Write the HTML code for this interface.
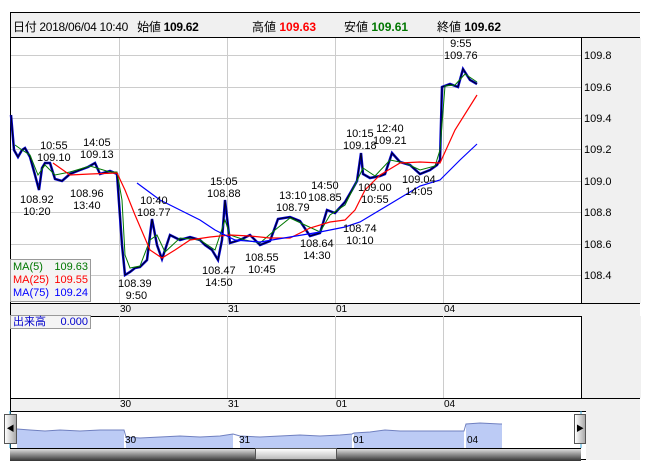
<!DOCTYPE html><html><head><meta charset="utf-8"><style>
body{margin:0;width:652px;height:469px;background:#fff;position:relative;overflow:hidden;font-family:"Liberation Sans","Noto Sans CJK JP",sans-serif;font-size:11px;color:#000}
.a{position:absolute}
.t{position:absolute;line-height:12px;text-align:center;font-size:11px;white-space:nowrap}
</style></head><body>
<div class="a" style="left:10px;top:12px;width:630px;height:448px;border:1px solid #000;box-sizing:border-box"></div>
<div class="a" style="left:11px;top:13px;width:629px;height:24px;background:#f0f0f0;border-bottom:1px solid #000"></div>
<div class="a" style="left:13px;top:18px;font-size:12px;letter-spacing:-0.3px">日付 2018/06/04 10:40&nbsp;&nbsp; 始値 <b>109.62</b></div>
<div class="a" style="left:252px;top:18px;font-size:12px">高値 <b style="color:#f00">109.63</b></div>
<div class="a" style="left:344px;top:18px;font-size:12px">安値 <b style="color:#070">109.61</b></div>
<div class="a" style="left:437px;top:18px;font-size:12px">終値 <b>109.62</b></div>
<div class="a" style="left:581px;top:38px;width:59px;height:265px;background:#f0f0f0;border-left:1px solid #000"></div>
<div class="a" style="left:11px;top:303px;width:629px;height:12px;background:#f0f0f0;border-top:1px solid #000;border-bottom:1px solid #000"></div>
<div class="a" style="left:581px;top:316px;width:59px;height:82px;background:#f0f0f0;border-left:1px solid #000"></div>
<div class="a" style="left:11px;top:398px;width:629px;height:12px;background:#f0f0f0;border-top:1px solid #000;border-bottom:1px solid #000"></div>
<div class="a" style="left:586px;top:411px;width:54px;height:49px;background:#f0f0f0"></div>
<svg class="a" style="left:0;top:0" width="652" height="469">
<g stroke="#ccc" stroke-width="1">
<line x1="11" y1="55.5" x2="581" y2="55.5"/><line x1="11" y1="87.5" x2="581" y2="87.5"/><line x1="11" y1="118.5" x2="581" y2="118.5"/><line x1="11" y1="149.5" x2="581" y2="149.5"/><line x1="11" y1="181.5" x2="581" y2="181.5"/><line x1="11" y1="212.5" x2="581" y2="212.5"/><line x1="11" y1="244.5" x2="581" y2="244.5"/><line x1="11" y1="275.5" x2="581" y2="275.5"/>
<line x1="119.5" y1="38" x2="119.5" y2="303"/><line x1="227.5" y1="38" x2="227.5" y2="303"/><line x1="335.5" y1="38" x2="335.5" y2="303"/><line x1="443.5" y1="38" x2="443.5" y2="303"/>
<line x1="119.5" y1="316" x2="119.5" y2="398"/><line x1="227.5" y1="316" x2="227.5" y2="398"/><line x1="335.5" y1="316" x2="335.5" y2="398"/><line x1="443.5" y1="316" x2="443.5" y2="398"/>
</g>
<polyline fill="none" stroke="#00c" stroke-width="2.5" points="11,115 14,150 18,157 22,150 25,148 30,157 35,175 39,190 42,168 45,163 50,163 55,179 62,181 70,174 80,170 88,167 95,163 100,174 110,171 117,174 122,245 125,275 130,272 135,268 140,267 147,260 152,219 157,245 162,259 170,235 180,240 190,237 200,240 205,245 212,250 218,260 222,240 225,200 230,243 240,240 250,235 260,245 270,241 278,219 290,217 300,221 310,236 320,233 327,210 335,213 345,202 352,190 357,181 361,153 363,174 370,178 380,176 385,174 392,153 400,162 410,165 420,174 430,170 437,165 440,160 442,87 450,84 458,87 463,69 470,80 477,84"/>
<polyline fill="none" stroke="#000" stroke-width="0.8" points="11,115 14,150 18,157 22,150 25,148 30,157 35,175 39,190 42,168 45,163 50,163 55,179 62,181 70,174 80,170 88,167 95,163 100,174 110,171 117,174 122,245 125,275 130,272 135,268 140,267 147,260 152,219 157,245 162,259 170,235 180,240 190,237 200,240 205,245 212,250 218,260 222,240 225,200 230,243 240,240 250,235 260,245 270,241 278,219 290,217 300,221 310,236 320,233 327,210 335,213 345,202 352,190 357,181 361,153 363,174 370,178 380,176 385,174 392,153 400,162 410,165 420,174 430,170 437,165 440,160 442,87 450,84 458,87 463,69 470,80 477,84"/>
<polyline fill="none" stroke="#070" stroke-width="1" points="15,145 22,150 30,155 38,175 45,165 55,175 70,172 90,166 110,172 117,172 122,200 125,255 130,268 140,266 150,240 157,235 165,252 180,238 200,240 215,250 225,220 230,235 245,240 260,243 275,230 290,218 305,225 320,232 330,215 345,205 355,185 363,168 375,176 390,160 405,163 420,170 435,166 440,150 445,86 455,85 465,74 477,82"/>
<polyline fill="none" stroke="#f00" stroke-width="1.2" points="53,163 70,175 90,174 117,173 125,190 135,215 150,250 162,258 175,250 190,240 210,237 230,235 250,236 270,238 290,238 310,228 330,222 345,220 355,210 365,190 380,175 400,163 420,162 440,163 455,130 477,95"/>
<polyline fill="none" stroke="#00f" stroke-width="1.2" points="137,183 160,200 180,210 200,220 215,230 235,240 260,242 290,237 320,232 345,227 360,222 380,210 400,198 420,186 440,180 460,160 477,144"/>
<polygon fill="#bccbf5" points="17,448 17,429 30,430 45,431 60,430 80,431 100,430 124,430 124,448"/>
<polygon fill="#bccbf5" points="126,448 126,437 140,438 160,437 180,436 200,437 220,436 233,434 233,448"/>
<polygon fill="#bccbf5" points="240,448 240,436 260,437 280,436 300,435 320,436 340,435 352,434 352,448"/>
<polygon fill="#bccbf5" points="354,448 354,433 370,432 385,430 400,431 420,431 440,431 464,431 464,448"/>
<polygon fill="#bccbf5" points="466,448 466,424 480,423 500,424 502,424 502,448"/>
<polyline fill="none" stroke="#7080c0" points="17,429 30,430 45,431 60,430 80,431 100,430 124,430 126,437 140,438 160,437 180,436 200,437 220,436 233,434 240,436 260,437 280,436 300,435 320,436 340,435 352,434 354,433 370,432 385,430 400,431 420,431 440,431 464,431 466,424 480,423 500,424 502,424"/>
<line x1="10" y1="411" x2="10" y2="448" stroke="#3ad"/><line x1="581" y1="411" x2="581" y2="448" stroke="#3ad"/>
</svg>
<div class="t" style="left:37px;top:140px">10:55<br>109.10</div>
<div class="t" style="left:80px;top:137px">14:05<br>109.13</div>
<div class="t" style="left:20px;top:194px">108.92<br>10:20</div>
<div class="t" style="left:70px;top:188px">108.96<br>13:40</div>
<div class="t" style="left:137px;top:195px">10:40<br>108.77</div>
<div class="t" style="left:207px;top:176px">15:05<br>108.88</div>
<div class="t" style="left:118px;top:278px">108.39<br>&nbsp;9:50</div>
<div class="t" style="left:202px;top:265px">108.47<br>14:50</div>
<div class="t" style="left:245px;top:252px">108.55<br>10:45</div>
<div class="t" style="left:276px;top:190px">13:10<br>108.79</div>
<div class="t" style="left:308px;top:180px">14:50<br>108.85</div>
<div class="t" style="left:300px;top:238px">108.64<br>14:30</div>
<div class="t" style="left:343px;top:128px">10:15<br>109.18</div>
<div class="t" style="left:373px;top:123px">12:40<br>109.21</div>
<div class="t" style="left:358px;top:182px">109.00<br>10:55</div>
<div class="t" style="left:343px;top:223px">108.74<br>10:10</div>
<div class="t" style="left:402px;top:174px">109.04<br>14:05</div>
<div class="t" style="left:444px;top:38px">9:55<br>109.76</div>
<div class="a" style="left:584px;top:50px;line-height:12px">109.8</div>
<div class="a" style="left:584px;top:82px">109.6</div>
<div class="a" style="left:584px;top:113px">109.4</div>
<div class="a" style="left:584px;top:144px">109.2</div>
<div class="a" style="left:584px;top:176px">109.0</div>
<div class="a" style="left:584px;top:207px">108.8</div>
<div class="a" style="left:584px;top:239px">108.6</div>
<div class="a" style="left:584px;top:270px">108.4</div>
<div class="a" style="left:120px;top:304px;font-size:10px">30</div>
<div class="a" style="left:228px;top:304px;font-size:10px">31</div>
<div class="a" style="left:336px;top:304px;font-size:10px">01</div>
<div class="a" style="left:444px;top:304px;font-size:10px">04</div>
<div class="a" style="left:120px;top:399px;font-size:10px">30</div>
<div class="a" style="left:228px;top:399px;font-size:10px">31</div>
<div class="a" style="left:336px;top:399px;font-size:10px">01</div>
<div class="a" style="left:444px;top:399px;font-size:10px">04</div>
<div class="a" style="left:125px;top:435px;font-size:10px">30</div>
<div class="a" style="left:239px;top:435px;font-size:10px">31</div>
<div class="a" style="left:353px;top:435px;font-size:10px">01</div>
<div class="a" style="left:467px;top:435px;font-size:10px">04</div>
<div class="a" style="left:10px;top:259px;width:81px;height:43px;background:#f4f4f4;border:1px solid #999;box-sizing:border-box;line-height:13px;padding:1px 2px">
<div style="color:#070">MA(5)<span style="float:right">109.63</span></div>
<div style="color:#f00">MA(25)<span style="float:right">109.55</span></div>
<div style="color:#00f">MA(75)<span style="float:right">109.24</span></div></div>
<div class="a" style="left:10px;top:315px;width:81px;height:14px;background:#f4f4f4;border:1px solid #999;box-sizing:border-box;line-height:12px;padding:0 2px;color:#00c">出来高<span style="float:right">0.000</span></div>
<div class="a" style="left:4px;top:414px;width:13px;height:30px;border:1px solid #555;box-sizing:border-box;background:linear-gradient(90deg,#fff,#aaa);font-size:8px;line-height:28px;text-align:center">◀</div>
<div class="a" style="left:574px;top:414px;width:12px;height:30px;border:1px solid #555;box-sizing:border-box;background:linear-gradient(90deg,#fff,#aaa);font-size:8px;line-height:28px;text-align:center">▶</div>
<div class="a" style="left:10px;top:448px;width:571px;height:12px;background:linear-gradient(#ddd,#333);border-top:1px solid #000"></div>
<div class="a" style="left:255px;top:448px;width:82px;height:12px;background:linear-gradient(#fff,#bbb);border:1px solid #555;box-sizing:border-box"></div>
</body></html>
